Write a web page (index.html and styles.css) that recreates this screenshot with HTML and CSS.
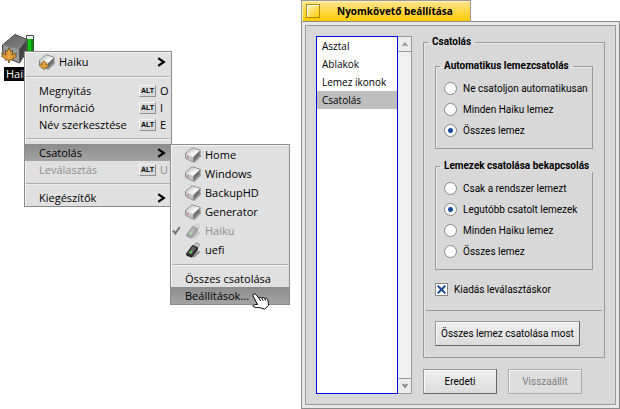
FILE: index.html
```html
<!DOCTYPE html>
<html lang="hu">
<head>
    <meta charset="UTF-8">
    <meta name="viewport" content="width=device-width, initial-scale=1.0">
    <title>Nyomkövető beállítása</title>
    <link rel="stylesheet" href="styles.css">
</head>
<body>
    <!-- Shared icons -->
    <svg class="defs" aria-hidden="true">
        <defs>
            <linearGradient id="diskTop" x1="0" y1="0" x2="1" y2="1">
                <stop offset="0" stop-color="#b0b0b0"/>
                <stop offset="0.6" stop-color="#fafafa"/>
                <stop offset="1" stop-color="#c8c8c8"/>
            </linearGradient>
            <linearGradient id="volumeTop" x1="0" y1="0" x2="1" y2="1">
                <stop offset="0" stop-color="#5c5c5c"/>
                <stop offset="1" stop-color="#8a8a8a"/>
            </linearGradient>
            <symbol id="disk" viewBox="0 0 16 16">
                <path d="M8 15.5 L15.5 7.5 L16 9.5 L9.5 16 Z" fill="#000" opacity="0.3"/>
                <path d="M0.5 6.6 L7 0.8 L15.2 3.4 L14.8 8.5 L8 15 L0.8 11.3 Z" fill="#d8d8d8" stroke="#5a5a5a" stroke-width="0.7"/>
                <path d="M1 6.7 L7 1.2 L14.7 3.8 L8.4 10 Z" fill="url(#diskTop)"/>
                <path d="M8.4 10 L14.8 3.8 L14.4 8.3 L8 14.6 Z" fill="#6e6e6e"/>
                <path d="M1 7 L8.2 10.2 L7.8 14.5 L1.2 11 Z" fill="#c4c4c4"/>
                <path d="M2 9.3 L3.6 10 L3.6 11 L2 10.3 Z" fill="#d05a38"/>
            </symbol>
            <symbol id="leaf" viewBox="0 0 14 14">
                <path d="M7 0.3 L8.4 4 L10.4 2.8 L9.6 7 L13.6 5 L12.8 7.4 L13.8 8 L10 10.6 L10.4 11.6 L7.5 11.2 L7.5 13.8 L6.5 13.8 L6.5 11.2 L3.6 11.6 L4 10.6 L0.2 8 L1.2 7.4 L0.4 5 L4.4 7 L3.6 2.8 L5.6 4 Z" fill="#dd9a34" stroke="#5f3d10" stroke-width="0.6"/>
                <path d="M7 3 L7 11" fill="none" stroke="#f8c868" stroke-width="0.6"/>
            </symbol>
            <symbol id="usb" viewBox="0 0 16 16">
                <path d="M7 15 L13 9 L15.4 10 L9 15.6 Z" fill="#000" opacity="0.4"/>
                <path d="M8.6 4 L11 0.8 L14.6 2.2 L12.8 6 Z" fill="#c4ccd4" stroke="#8a8a8a" stroke-width="0.8"/>
                <path d="M1.6 11.4 L7.6 3.4 L12.6 5.6 L12.4 8 L6.6 15.2 L1.8 13.4 Z" fill="#2c2c2c" stroke="#1c1c1c" stroke-width="0.8"/>
                <path d="M3 10.8 L8 4.6 L11.2 6 L6 12.4 Z" fill="#686868"/>
                <circle cx="6" cy="10.2" r="1.2" fill="#3fd24a"/>
            </symbol>
            <symbol id="arrow" viewBox="0 0 9 10">
                <path d="M1.2 1.2 L6.8 5 L1.2 8.8" fill="none" stroke="#000" stroke-width="2.2"/>
            </symbol>
        </defs>
    </svg>

    <div class="desktop">
        <!-- Desktop volume with its context menu -->
        <div class="workspace">
            <div class="volume">
                <svg class="volume-icon" viewBox="0 0 36 34" aria-hidden="true">
                    <path d="M25.5 2.5 H32.5 V30 H25.5 Z" fill="#f4fff4" stroke="#444"/>
                    <path d="M26 6 H32 V30 H26 Z" fill="#14c414"/>
                    <path d="M30 6 H32 V30 H30 Z" fill="#0a8c0a"/>
                    <path d="M1.5 12 L14 1.5 L26 6.5 L26 18 L18.5 30 L2 23 Z" fill="#9a9a9a" stroke="#333"/>
                    <path d="M2 12 L14 2 L25.5 6.7 L18 16.5 Z" fill="url(#volumeTop)"/>
                    <path d="M18 16.5 L25.5 6.7 L25.5 18 L18.3 29.3 Z" fill="#444"/>
                    <use href="#leaf" x="0" y="14" width="16" height="16"/>
                </svg>
                <span class="volume-label">Haiku</span>
            </div>

            <ul class="menu context-menu">
                <li><a href="#" class="item item-icon"><svg class="icon"><use href="#disk"/><use href="#leaf" x="0" y="6" width="10" height="10"/></svg><span class="label">Haiku</span><svg class="arrow"><use href="#arrow"/></svg></a></li>
                <li class="separator"></li>
                <li><a href="#" class="item"><span class="label">Megnyitás</span><span class="alt">ALT</span><span class="key">O</span></a></li>
                <li><a href="#" class="item"><span class="label">Információ</span><span class="alt">ALT</span><span class="key">I</span></a></li>
                <li><a href="#" class="item"><span class="label">Név szerkesztése</span><span class="alt">ALT</span><span class="key">E</span></a></li>
                <li class="separator"></li>
                <li><a href="#" class="item selected"><span class="label">Csatolás</span><svg class="arrow"><use href="#arrow"/></svg></a></li>
                <li><a href="#" class="item disabled"><span class="label">Leválasztás</span><span class="alt">ALT</span><span class="key">U</span></a></li>
                <li class="separator"></li>
                <li><a href="#" class="item"><span class="label">Kiegészítők</span><svg class="arrow"><use href="#arrow"/></svg></a></li>
            </ul>

            <ul class="menu mount-menu">
                <li><a href="#" class="item item-icon"><svg class="icon"><use href="#disk"/></svg><span class="label">Home</span></a></li>
                <li><a href="#" class="item item-icon"><svg class="icon"><use href="#disk"/></svg><span class="label">Windows</span></a></li>
                <li><a href="#" class="item item-icon"><svg class="icon"><use href="#disk"/></svg><span class="label">BackupHD</span></a></li>
                <li><a href="#" class="item item-icon"><svg class="icon"><use href="#disk"/></svg><span class="label">Generator</span></a></li>
                <li><a href="#" class="item item-icon disabled checked"><svg class="check" viewBox="0 0 9 9"><path d="M1 4.5 L3.4 7.4 L7.8 1.2" fill="none" stroke="#777" stroke-width="2"/></svg><svg class="icon"><use href="#usb"/></svg><span class="label">Haiku</span></a></li>
                <li><a href="#" class="item item-icon"><svg class="icon"><use href="#usb"/></svg><span class="label">uefi</span></a></li>
                <li class="separator"></li>
                <li><a href="#" class="item">Összes csatolása</a></li>
                <li><a href="#" class="item selected">Beállítások...</a></li>
            </ul>

            <svg class="cursor" viewBox="0 0 18 17" aria-hidden="true">
                <path d="M1 2.2 C1 0.6 3 0.4 3.8 1.6 L7 5.2 C7.4 4 9 4 9.8 5 C10.4 4.2 12 4.4 12.6 5.4 C13.4 4.8 14.8 5.2 15.4 6.4 C16.6 8.4 16.4 10.2 16.4 12.4 L12.6 16.2 L8.6 14.8 C6.4 14.6 2.6 14.6 1 13.4 C0.4 12 2 11.4 5.6 11.6 L1.6 4 C1.2 3.4 1 2.8 1 2.2 Z" fill="#fff" stroke="#000"/>
                <path d="M7 5.2 L8.6 8 M9.8 5 L11.2 7.8 M12.6 5.4 L13.6 7.6" fill="none" stroke="#000"/>
            </svg>
        </div>

        <!-- Tracker preferences window -->
        <div class="window">
            <div class="tab">
                <button class="close" aria-label="Bezárás"></button>
                <span class="title">Nyomkövető beállítása</span>
            </div>
            <div class="frame">
                <div class="panel">
                    <div class="list-view">
                        <ul class="list">
                            <li>Asztal</li>
                            <li>Ablakok</li>
                            <li>Lemez ikonok</li>
                            <li class="active">Csatolás</li>
                        </ul>
                        <div class="scrollbar">
                            <button class="scroll-btn" aria-label="Fel"><svg viewBox="0 0 8 8"><path d="M1 5.5 L4 2 L7 5.5 L5.5 6.5 L4 5 L2.5 6.5 Z" fill="#999"/></svg></button>
                            <div class="track"></div>
                            <button class="scroll-btn" aria-label="Le"><svg viewBox="0 0 8 8"><path d="M1 2.5 L4 6.5 L7 2.5 L5.5 1.5 L4 3 L2.5 1.5 Z" fill="#888"/></svg></button>
                        </div>
                    </div>

                    <div class="settings">
                        <fieldset class="box outer">
                            <legend>Csatolás</legend>
                            <fieldset class="box">
                                <legend>Automatikus lemezcsatolás</legend>
                                <label class="option"><input type="radio" name="auto">Ne csatoljon automatikusan</label>
                                <label class="option"><input type="radio" name="auto">Minden Haiku lemez</label>
                                <label class="option"><input type="radio" name="auto" checked>Összes lemez</label>
                            </fieldset>
                            <fieldset class="box">
                                <legend>Lemezek csatolása bekapcsolás</legend>
                                <label class="option"><input type="radio" name="boot">Csak a rendszer lemezt</label>
                                <label class="option"><input type="radio" name="boot" checked>Legutóbb csatolt lemezek</label>
                                <label class="option"><input type="radio" name="boot">Minden Haiku lemez</label>
                                <label class="option"><input type="radio" name="boot">Összes lemez</label>
                            </fieldset>
                            <label class="option eject"><input type="checkbox" checked>Kiadás leválasztáskor</label>
                            <hr>
                            <button class="btn mount-btn">Összes lemez csatolása most</button>
                        </fieldset>
                        <div class="buttons">
                            <button class="btn">Eredeti</button>
                            <button class="btn" disabled>Visszaállít</button>
                        </div>
                    </div>
                </div>
            </div>
        </div>
    </div>
</body>
</html>
```

FILE: styles.css
```css
* {
    box-sizing: border-box;
}
body {
    margin: 0;
    background: #fff;
    font-family: "Open Sans", "Noto Sans", sans-serif;
    font-size: 10px;
    color: #000;
}
ul {
    list-style: none;
    margin: 0;
    padding: 0;
}
button, input {
    font: inherit;
    margin: 0;
}
.defs {
    position: absolute;
    width: 0;
    height: 0;
}
.desktop {
    display: grid;
    grid-template-columns: 301px minmax(0, 1fr);
}
.workspace {
    position: relative;
}

/* Desktop icon */
.volume {
    position: absolute;
    left: 1px;
    top: 33px;
    width: 36px;
}
.volume-icon {
    display: block;
    width: 36px;
    height: 34px;
}
.volume-label {
    display: block;
    margin-left: 3px;
    padding-left: 2px;
    line-height: 14px;
    font-size: 11px;
    background: #000;
    color: #fff;
}

/* Menus */
.menu {
    position: absolute;
    border: 1px solid #8c8c8c;
    background: #e0e0e0;
    box-shadow: inset 1px 1px #f4f4f4;
    font-size: 11px;
}
.context-menu {
    left: 24px;
    top: 51px;
    width: 148px;
}
.mount-menu {
    left: 170px;
    top: 144px;
    width: 120px;
}
.item {
    display: flex;
    align-items: center;
    height: 17px;
    padding: 0 3px 0 14px;
    color: #000;
    text-decoration: none;
    white-space: nowrap;
}
.item-icon {
    height: 19px;
    gap: 4px;
}
.label {
    flex: 1;
}
.icon {
    width: 16px;
    height: 16px;
}
.arrow {
    width: 9px;
    height: 10px;
    margin-right: 2px;
}
.selected {
    background: linear-gradient(#8c8c8c, #a4a4a4);
}
.disabled {
    color: #8e8e8e;
}
.disabled .icon {
    opacity: 0.35;
}
.checked {
    padding-left: 1px;
}
.check {
    width: 9px;
    height: 9px;
}
.alt {
    width: 17px;
    height: 12px;
    border: 1px solid;
    border-color: #f4f4f4 #909090 #909090 #f4f4f4;
    background: #d8d8d8;
    color: #000;
    font: bold 7px/10px "Liberation Sans", sans-serif;
    text-align: center;
}
.key {
    width: 8px;
    margin-left: 4px;
}
.separator {
    height: 1px;
    margin: 5px 1px;
    background: #b0b0b0;
    box-shadow: 0 1px #f0f0f0;
}
.cursor {
    position: absolute;
    left: 252px;
    top: 293px;
    width: 18px;
    height: 17px;
}

/* Window */
.tab {
    display: flex;
    align-items: center;
    width: 170px;
    height: 21px;
    padding-left: 4px;
    border: 1px solid #999;
    border-bottom: 0;
    background: linear-gradient(#ffe590, #ffcb00);
    box-shadow: inset 1px 1px #fff0b8;
}
.close {
    width: 14px;
    height: 14px;
    padding: 0;
    border: 1px solid #b08c00;
    background: linear-gradient(135deg, #fff6cc, #ffcb00);
    box-shadow: inset 1px 1px #fff;
}
.title {
    flex: 1;
    padding-left: 17px;
    font-weight: bold;
}
.frame {
    padding: 3px;
    border: 1px solid #8c8c8c;
    background: #e8e8e8;
}
.panel {
    display: flex;
    gap: 11px;
    padding: 10px;
    border: 1px solid #999;
    background: #d8d8d8;
}
.list-view {
    display: flex;
    width: 96px;
}
.list {
    flex: 1;
    border: 1px solid #0000e5;
    background: #fff;
}
.list li {
    padding-left: 5px;
    line-height: 18px;
}
.list .active {
    background: #bebebe;
}
.scrollbar {
    display: flex;
    flex-direction: column;
    width: 14px;
    border: 1px solid #999;
    border-left: 0;
}
.scroll-btn {
    height: 14px;
    padding: 3px;
    border: 0;
    background: #ececec;
}
.scroll-btn svg {
    display: block;
    width: 8px;
    height: 8px;
}
.track {
    flex: 1;
    border: solid #999;
    border-width: 1px 0;
    background: #f0f0f0;
}
.settings {
    flex: 1;
    min-width: 0;
    font-family: Roboto, "Noto Sans", sans-serif;
}
.box {
    min-width: 0;
    margin: 0 0 11px;
    padding: 6px 8px 7px;
    border: 1px solid #999;
    box-shadow: inset 1px 1px #e8e8e8;
}
.box legend {
    margin: 0 -8px 0 -4px;
    padding: 0 4px;
    line-height: 12px;
    font-weight: bold;
    white-space: nowrap;
}
.box.outer {
    margin: 0;
    padding: 12px 11px 11px;
}
.box.outer > legend {
    margin-left: -7px;
}
.option {
    display: flex;
    align-items: center;
    gap: 6px;
    height: 21px;
    white-space: nowrap;
}
.option input {
    appearance: none;
    flex: none;
    width: 13px;
    height: 13px;
    border: 1px solid #888;
    background: #fff;
}
.option input[type="radio"] {
    border-radius: 50%;
}
.option input[type="radio"]:checked {
    background: radial-gradient(circle, #1a4a96 2px, #fff 3px);
}
.option input[type="checkbox"]:checked::before {
    content: "";
    display: block;
    width: 9px;
    height: 9px;
    margin: 1px;
    background: #1a4a96;
    clip-path: polygon(0 15%, 15% 0, 50% 33%, 85% 0, 100% 15%, 67% 50%, 100% 85%, 85% 100%, 50% 67%, 15% 100%, 0 85%, 33% 50%);
}
.eject {
    margin-top: -2px;
}
hr {
    height: 1px;
    margin: 10px -9px;
    border: 0;
    background: #999;
}
.btn {
    height: 25px;
    padding: 0 5px;
    border: 1px solid #777;
    border-color: #999 #666 #666 #999;
    background: linear-gradient(#f0f0f0, #dcdcdc);
    color: #000;
    box-shadow: inset 1px 1px #fafafa;
    white-space: nowrap;
}
.btn:disabled {
    border-color: #aaa;
    background: #dedede;
    color: #808080;
}
.buttons {
    display: flex;
    gap: 11px;
    margin-top: 11px;
}
.buttons .btn {
    width: 74px;
}
```
